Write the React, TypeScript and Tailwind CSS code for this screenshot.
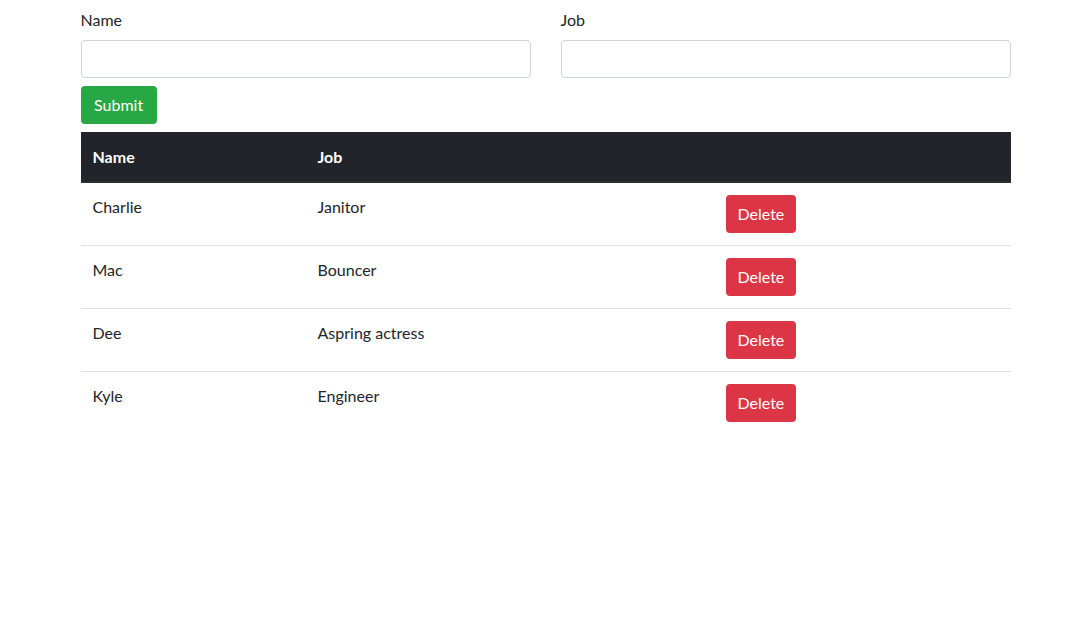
import React, { useState } from 'react';

type Person = { name: string; job: string };

const INITIAL: Person[] = [
  { name: 'Charlie', job: 'Janitor' },
  { name: 'Mac', job: 'Bouncer' },
  { name: 'Dee', job: 'Aspring actress' },
  { name: 'Kyle', job: 'Engineer' },
];

const App: React.FC = () => {
  const [people, setPeople] = useState<Person[]>(INITIAL);
  const [name, setName] = useState('');
  const [job, setJob] = useState('');

  const submit = (e: React.FormEvent) => {
    e.preventDefault();
    if (!name || !job) return;
    setPeople([...people, { name, job }]);
    setName('');
    setJob('');
  };

  return (
    <div className="min-h-screen bg-white text-[#212529] text-base leading-6 font-['Lato','Liberation_Sans',sans-serif]">
      <div className="w-[930px] mx-auto pt-2">
        <form onSubmit={submit}>
          <div className="grid grid-cols-2 gap-[30px]">
            <div>
              <label className="block mb-2">Name</label>
              <input
                value={name}
                onChange={e => setName(e.target.value)}
                className="block w-full h-[38px] px-3 border border-[#ced4da] rounded-[4px] bg-white outline-none"
              />
            </div>
            <div>
              <label className="block mb-2">Job</label>
              <input
                value={job}
                onChange={e => setJob(e.target.value)}
                className="block w-full h-[38px] px-3 border border-[#ced4da] rounded-[4px] bg-white outline-none"
              />
            </div>
          </div>
          <button
            type="submit"
            className="mt-2 h-[38px] px-[13.5px] rounded-[4px] bg-[#28a745] text-white"
          >
            Submit
          </button>
        </form>

        <table className="w-full mt-2 border-collapse text-left">
          <thead>
            <tr className="bg-[#212529] text-white border-b-2 border-[#2c3034]">
              <th className="w-[225px] px-3 pt-[13px] pb-3 font-bold">Name</th>
              <th className="w-[408px] px-3 pt-[13px] pb-3 font-bold">Job</th>
              <th className="px-3 pt-[13px] pb-3"></th>
            </tr>
          </thead>
          <tbody>
            {people.map((p, i) => (
              <tr key={i} className={i < people.length - 1 ? 'border-b border-[#dee2e6]' : ''}>
                <td className="px-3 py-3 align-top">{p.name}</td>
                <td className="px-3 py-3 align-top">{p.job}</td>
                <td className="px-3 py-3 align-top">
                  <button
                    onClick={() => setPeople(people.filter((_, j) => j !== i))}
                    className="h-[38px] px-3 rounded-[4px] bg-[#dc3545] text-white"
                  >
                    Delete
                  </button>
                </td>
              </tr>
            ))}
          </tbody>
        </table>
      </div>
    </div>
  );
};

export default App;
